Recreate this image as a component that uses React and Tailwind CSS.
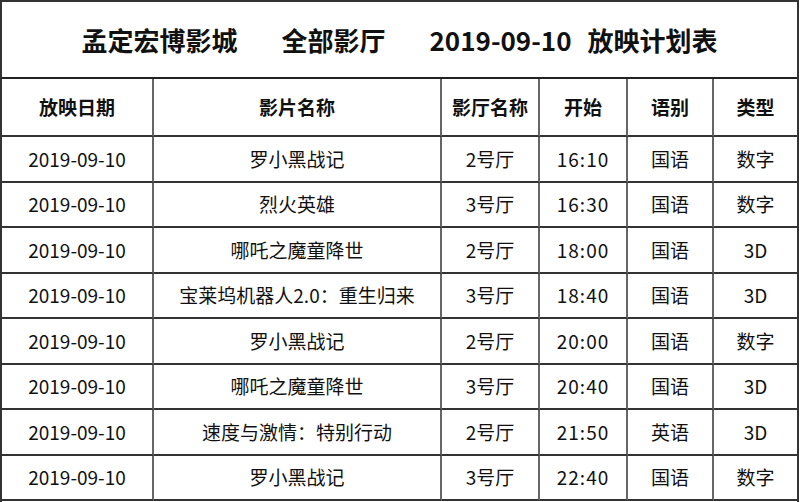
import React from 'react';

const rows = [
  { date: "2019-09-10", film: "罗小黑战记", hall: "2号厅", start: "16:10", lang: "国语", type: "数字" },
  { date: "2019-09-10", film: "烈火英雄", hall: "3号厅", start: "16:30", lang: "国语", type: "数字" },
  { date: "2019-09-10", film: "哪吒之魔童降世", hall: "2号厅", start: "18:00", lang: "国语", type: "3D" },
  { date: "2019-09-10", film: "宝莱坞机器人2.0：重生归来", hall: "3号厅", start: "18:40", lang: "国语", type: "3D" },
  { date: "2019-09-10", film: "罗小黑战记", hall: "2号厅", start: "20:00", lang: "国语", type: "数字" },
  { date: "2019-09-10", film: "哪吒之魔童降世", hall: "3号厅", start: "20:40", lang: "国语", type: "3D" },
  { date: "2019-09-10", film: "速度与激情：特别行动", hall: "2号厅", start: "21:50", lang: "英语", type: "3D" },
  { date: "2019-09-10", film: "罗小黑战记", hall: "3号厅", start: "22:40", lang: "国语", type: "数字" },
];

const headers = ["放映日期", "影片名称", "影厅名称", "开始", "语别", "类型"];

const cols = "grid grid-cols-[152px_288px_98px_88px_86px_1fr]";

const Cell = ({ children, last, className = "" }) => (
  <div className={`flex items-center justify-center border-b-2 border-b-[#333] ${last ? "" : "border-r-2 border-r-[#666]"} ${className}`}>
    {children}
  </div>
);

const App = () => {
  return (
    <div
      className="w-[800px] h-[502px] bg-white text-[#111] overflow-hidden"
      style={{ fontFamily: '"Noto Sans CJK SC", "Liberation Sans", sans-serif' }}
    >
      <div className="w-[799px] h-[502px] border-l-2 border-t-2 border-r-2 border-[#333] flex flex-col">
        {/* title */}
        <div className="h-[77px] border-b-2 border-[#222] flex items-center justify-center text-[26px] font-bold">
          <span>孟定宏博影城</span>
          <span className="ml-[44px]">全部影厅</span>
          <span className="ml-[44px]">2019-09-10</span>
          <span className="ml-[16px]">放映计划表</span>
        </div>

        <div className={`${cols} h-[58px]`}>
          {headers.map((h, i) => (
            <Cell key={h} last={i === headers.length - 1} className="text-[19px] font-bold">
              {h}
            </Cell>
          ))}
        </div>

        {rows.map((r, idx) => (
          <div key={idx} className={`${cols} h-[45.5px] text-[19px]`}>
            <Cell>{r.date}</Cell>
            <Cell>{r.film}</Cell>
            <Cell>{r.hall}</Cell>
            <Cell className="tracking-[1px]">{r.start}</Cell>
            <Cell>{r.lang}</Cell>
            <Cell last>{r.type}</Cell>
          </div>
        ))}
      </div>
    </div>
  );
};

export default App;
